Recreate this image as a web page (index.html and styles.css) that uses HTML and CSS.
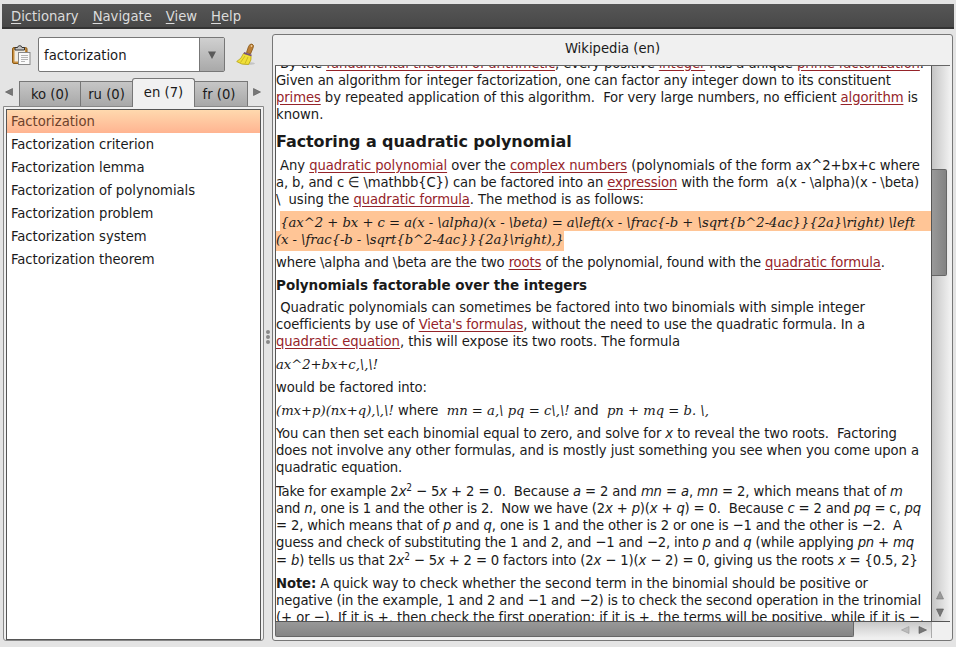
FILE: index.html
```html
<!DOCTYPE html>
<html lang="en">
<head>
<meta charset="utf-8">
<title>Dictionary</title>
<link rel="stylesheet" href="styles.css">
</head>
<body>
<nav class="menubar"><span><u>D</u>ictionary</span><span><u>N</u>avigate</span><span><u>V</u>iew</span><span><u>H</u>elp</span></nav>
<div class="main">
<aside class="side">
  <div class="search">
    <svg class="paste" width="19" height="21" viewBox="0 0 19 21"><rect x=".5" y="2.500" width="14.500" height="16" rx="1.500" fill="#c98f3d" stroke="#8c5b17"/><path d="M2.500 4.500h10.500v10l-3 2H2.500z" fill="#efece3"/><path d="M3 5V2.500h2.500a2.300 2.300 0 0 1 4.500 0H12.500V5z" fill="#c4c4c4" stroke="#333"/><rect x="6.500" y="7.500" width="11.500" height="12" fill="#fafafa" stroke="#888"/><path d="M9 10.500h7M9 12.500h7M9 14.500h7M9 16.500h4" stroke="#b4b4b4"/></svg>
    <div class="combo"><span class="entry">factorization</span><span class="drop"><svg width="8" height="8" viewBox="0 0 8 8"><path d="M0 .5h8L4 8z" fill="#5a5a5a"/></svg></span></div>
    <svg class="broom" width="20" height="24" viewBox="0 0 20 24"><ellipse cx="12" cy="20.500" rx="7" ry="1.500" fill="#c4c4c4"/><path d="M10.500 9.500 12.500 3.500Q13.500 .8 16 1 18.500 2 17 5L14.500 11z" fill="#bd7f35" stroke="#855515" stroke-width=".8"/><path d="M7.500 10.500Q5.500 16 .7 18.500 5 22 12.500 21.500 16 17 15 12.500z" fill="#f0df38" stroke="#b6a312" stroke-width=".8"/><path d="M9 13 4.500 19.500M12 14 9 20.500" stroke="#c2af1c" stroke-width=".8"/><path d="m7.800 9.800 7.700 2.700" stroke="#765179" stroke-width="1.800"/><circle cx="15.500" cy="3" r=".8" fill="#fff0cc"/></svg>
  </div>
  <div class="tabs">
    <svg class="arrow left" width="8" height="8" viewBox="0 0 8 8"><path d="M7.500 .5v7L.5 4z" fill="#777" stroke="#555" stroke-width=".6"/></svg>
    <span class="tab ko">ko (0)</span><span class="tab ru">ru (0)</span><span class="tab active">en (7)</span><span class="tab fr">fr (0)</span>
    <svg class="arrow right" width="8" height="8" viewBox="0 0 8 8"><path d="M.5 .5v7l7-3.500z" fill="#777" stroke="#555" stroke-width=".6"/></svg>
  </div>
  <div class="frame"><ul class="list"><li class="sel">Factorization</li><li>Factorization criterion</li><li>Factorization lemma</li><li>Factorization of polynomials</li><li>Factorization problem</li><li>Factorization system</li><li>Factorization theorem</li></ul></div>
</aside>
<div class="grip"><i></i><i></i><i></i></div>
<section class="panel">
  <header>Wikipedia (en)</header>
  <div class="view">
  <article class="doc">
<p class="first"><span class="ln" data-w="648"> By the <a>fundamental theorem of arithmetic</a>, every positive <a>integer</a> has a unique <a>prime factorization</a>.</span><span class="ln" data-w="615">Given an algorithm for integer factorization, one can factor any integer down to its constituent</span><span class="ln" data-w="642"><a>primes</a> by repeated application of this algorithm.  For very large numbers, no efficient <a>algorithm</a> is</span><span class="ln">known.</span></p>
<h2>Factoring a quadratic polynomial</h2>
<p><span class="ln" data-w="644"> Any <a>quadratic polynomial</a> over the <a>complex numbers</a> (polynomials of the form ax^2+bx+c where</span><span class="ln" data-w="643">a, b, and c ∈ \mathbb{C}) can be factored into an <a>expression</a> with the form  a(x - \alpha)(x - \beta)</span><span class="ln" data-w="368">\  using the <a>quadratic formula</a>. The method is as follows:</span></p>
<p class="marked"><span class="ln wide" data-w="639"> <em class="m">{ax^2 + bx + c = a(x - \alpha)(x - \beta) = a\left(x - \frac{-b + \sqrt{b^2-4ac}}{2a}\right) \left</em></span><span class="ln hl" data-w="288"><em class="m">(x - \frac{-b - \sqrt{b^2-4ac}}{2a}\right),}</em></span></p>
<p><span class="ln" data-w="609">where \alpha and \beta are the two <a>roots</a> of the polynomial, found with the <a>quadratic formula</a>.</span></p>
<h3>Polynomials factorable over the integers</h3>
<p><span class="ln" data-w="589"> Quadratic polynomials can sometimes be factored into two binomials with simple integer</span><span class="ln" data-w="589">coefficients by use of <a>Vieta's formulas</a>, without the need to use the quadratic formula. In a</span><span class="ln" data-w="404"><a>quadratic equation</a>, this will expose its two roots. The formula</span></p>
<p><span class="ln" data-w="102"><em class="m">ax^2+bx+c,\,\!</em></span></p>
<p><span class="ln" data-w="151">would be factored into:</span></p>
<p><span class="ln" data-w="433"><em class="m">(mx+p)(nx+q),\,\!</em> where  <em class="m">mn = a,\ pq = c\,\!</em> and  <em class="m">pn + mq = b. \,</em></span></p>
<p><span class="ln" data-w="621">You can then set each binomial equal to zero, and solve for <em>x</em> to reveal the two roots.  Factoring</span><span class="ln" data-w="643">does not involve any other formulas, and is mostly just something you see when you come upon a</span><span class="ln" data-w="126">quadratic equation.</span></p>
<p class="example"><span class="ln" data-w="627">Take for example 2<em>x</em><sup>2</sup> − 5<em>x</em> + 2 = 0.  Because <em>a</em> = 2 and <em>mn</em> = <em>a</em>, <em>mn</em> = 2, which means that of <em>m</em></span><span class="ln" data-w="645">and <em>n</em>, one is 1 and the other is 2.  Now we have (2<em>x</em> + <em>p</em>)(<em>x</em> + <em>q</em>) = 0.  Because <em>c</em> = 2 and <em>pq</em> = c, <em>pq</em></span><span class="ln" data-w="626">= 2, which means that of <em>p</em> and <em>q</em>, one is 1 and the other is 2 or one is −1 and the other is −2.  A</span><span class="ln" data-w="638">guess and check of substituting the 1 and 2, and −1 and −2, into <em>p</em> and <em>q</em> (while applying <em>pn</em> + <em>mq</em></span><span class="ln last" data-w="642">= <em>b</em>) tells us that 2<em>x</em><sup>2</sup> − 5<em>x</em> + 2 = 0 factors into (2<em>x</em> − 1)(<em>x</em> − 2) = 0, giving us the roots <em>x</em> = {0.5, 2}</span></p>
<p><span class="ln" data-w="592"><b>Note:</b> A quick way to check whether the second term in the binomial should be positive or</span><span class="ln" data-w="645">negative (in the example, 1 and 2 and −1 and −2) is to check the second operation in the trinomial</span><span class="ln" data-w="648">(+ or −). If it is +, then check the first operation: if it is +, the terms will be positive, while if it is −,</span></p>
  </article>
  <div class="vbar"><div class="vthumb"></div><svg class="varrows" width="8" height="26" viewBox="0 0 8 26"><path d="M4 .5 7.500 8h-7z" fill="#999" stroke="#777" stroke-width=".6"/><path d="M.5 18h7L4 25.500z" fill="#777" stroke="#555" stroke-width=".6"/></svg></div>
  </div>
  <div class="hbar"><div class="hthumb"></div><svg class="harrows" width="26" height="8" viewBox="0 0 26 8"><path d="M8 .5v7L.5 4z" fill="#bbb" stroke="#999" stroke-width=".6"/><path d="M18 .5v7L25.500 4z" fill="#777" stroke="#555" stroke-width=".6"/></svg></div>
</section>
</div>
<script src="fit.js"></script>
</body>
</html>
```
FILE: fit.js
```js
// Tracks each text line so that it fills its set measure.
document.querySelectorAll('.ln[data-w]').forEach(function (line) {
  var range = document.createRange();
  range.selectNodeContents(line);
  // Spacing switches ligatures off, so measure with it already on.
  line.style.letterSpacing = '0.001px';
  var extra = Number(line.dataset.w) - range.getBoundingClientRect().width;
  line.style.letterSpacing = (extra / line.textContent.length).toFixed(4) + 'px';
});
```
FILE: styles.css
```css
* { box-sizing: border-box; }
body { margin: 0; width: 956px; height: 647px; overflow: hidden; background: #e4e4e4; color: #1a1a1a; font: 14.67px/17px "DejaVu Sans Condensed", "DejaVu Sans", sans-serif; font-stretch: condensed; padding-top: 4px; }
svg { display: block; flex: none; }
.menubar { height: 25px; margin: 0 2px; padding: 0 9px; display: flex; gap: 14px; align-items: center; color: #dcdcdc; background: linear-gradient(#565656, #484848); border-bottom: 2px solid #333; }
.menubar u { text-underline-offset: 2px; }
.main { display: flex; height: 618px; }
.side { width: 264px; padding-left: 3px; flex: none; }
.search { display: flex; height: 49px; padding-top: 8px; }
.paste { margin: 8px 7px 0 9px; }
.combo { width: 187px; height: 35px; display: flex; border: 1px solid #777; border-radius: 2px; background: #fff; }
.entry { flex: 1; padding: 8px 5px; }
.drop { width: 25px; display: flex; align-items: center; justify-content: center; background: linear-gradient(#d0d0d0, #a9a9a9); border-left: 1px solid #777; }
.broom { margin: 6px 0 0 11px; }
.tabs { display: flex; height: 28px; align-items: flex-end; position: relative; z-index: 1; }
.arrow { align-self: flex-start; margin-top: 10px; }
.left { margin-left: 2px; margin-right: 6px; }
.right { margin-left: 5px; }
.tab { height: 25px; padding-top: 3px; text-align: center; border: 1px solid #777; border-bottom: 0; background: linear-gradient(#c6c6c6, #a8a8a8); }
.ko { width: 62px; }
.ru { width: 51px; border-left: 0; border-right: 0; }
.active { width: 63px; height: 29px; margin-bottom: -1px; padding-top: 4px; background: #f1f1f1; border-radius: 3px 3px 0 0; }
.fr { width: 53px; border-left: 0; padding-right: 4px; }
.frame { width: 261px; height: 535px; border: 1px solid #888; border-radius: 0 0 3px 3px; background: #f1f1f1; padding: 2px 2px 0; }
.list { height: 531px; margin: 0; padding: 0; list-style: none; background: #fff; border: 1px solid #555; }
.list li { height: 23px; padding: 2px 4px; letter-spacing: -.02px; }
.list .sel { color: #6d412b; background: linear-gradient(#ffd9ae, #ffb491); }
.grip { width: 8px; display: flex; flex-direction: column; gap: 1px; align-items: center; padding-top: 301px; }
.grip i { width: 4px; height: 4px; border-radius: 2px; background: #888; }
.panel { width: 681px; height: 607px; margin-top: 5px; border: 1px solid #777; border-radius: 3px; background: #f0f0f0; padding: 0 2px; }
.panel header { height: 30px; padding-top: 4px; text-align: center; }
.view { display: flex; height: 557px; border-top: 1px solid #666; border-bottom: 1px solid #555; }
.doc { width: 657px; border-left: 1px solid #555; border-right: 1px solid #555; background: #fff; overflow: hidden; flex: none; }
.ln { display: block; height: 17px; white-space: pre; }
.ln a { color: #952329; text-decoration: underline; text-underline-offset: 2px; }
p { margin: 0 0 6px; }
.first { margin-top: -12px; margin-bottom: 10px; }
h2, h3 { margin: 0; font-family: "DejaVu Sans"; font-stretch: normal; white-space: pre; }
h2 { font-size: 16px; line-height: 19px; margin-bottom: 5px; letter-spacing: -.08px; }
h3 { font-size: 13.5px; line-height: 17px; margin: 7px 0 4px; }
.m { font-family: "DejaVu Serif", serif; font-stretch: normal; font-size: 13.2px; }
.marked { margin: -2px 0 2px; }
.marked .ln { height: 20px; background: #ffc596; }
.marked .wide { margin-left: 4px; text-indent: -4px; line-height: 22px; }
.marked .hl { width: 288px; line-height: 16px; }
sup { font-size: 10px; line-height: 0; vertical-align: 5px; }
.example { margin-top: 7px; }
.example .last { height: 18px; line-height: 19px; }
.vbar { width: 19px; background: linear-gradient(90deg, #c5c5c5, #f0f0f0); padding-top: 103px; }
.vthumb { height: 107px; width: 15px; border: 1px solid #666; border-left: 0; border-radius: 0 2px 2px 0; background: linear-gradient(90deg, #999, #838383); }
.varrows { margin: 315px 0 0 4px; }
.hbar { width: 657px; height: 16px; display: flex; border-right: 1px solid #aaa; background: linear-gradient(#c8c8c8, #f0f0f0); }
.hthumb { width: 579px; height: 15px; border: 1px solid #666; border-top: 0; border-radius: 0 0 2px 2px; background: linear-gradient(#989898, #858585); }
.harrows { margin: 4px 0 0 47px; }
```
